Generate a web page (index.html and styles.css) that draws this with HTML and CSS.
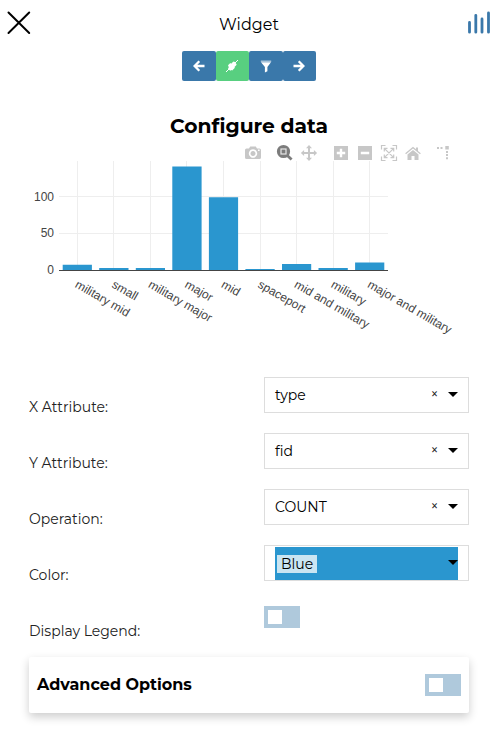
FILE: index.html
```html
<!DOCTYPE html>
<html lang="en">
<head>
<meta charset="utf-8">
<title>Widget</title>
<link rel="stylesheet" href="styles.css">
</head>
<body>
<header class="header">
  <svg class="close" width="24" height="24" viewBox="0 0 24 24"><path d="M1.5 1.500 22.200 22M22.200 1.500 1.500 22"/></svg>
  <span class="heading">Widget</span>
  <svg class="logo" width="24" height="24" viewBox="0 0 24 24"><path d="M2.500 12.500V22.200M8.800 5.300V22.200M15 9V22.200M21.500 3V22.200"/></svg>
</header>
<nav class="toolbar">
  <button class="tool"><svg width="12" height="12" viewBox="0 0 12 12"><path class="line" d="M11.500 6H2M6.300 1.300 1.600 6l4.700 4.700"/></svg></button>
  <button class="tool active"><svg width="14" height="14" viewBox="0 0 14 14"><path class="thin" d="M1 13 13 1"/><path d="M3 6.200 5.300 4l.8.8L8.500 2.400 10 3.100l1 1.400.7 1.300-2.200 2.100.4.9-2.700 2.600-1-.5-.9.9L3 9.800l.8-1.500z"/></svg></button>
  <button class="tool"><svg width="12" height="14" viewBox="0 0 12 14"><path d="M1 3.200h10L7.400 8v4.200L4.900 13.500V8z"/><path class="lid" d="M.8 1.500h10.400v1.600H.8z"/></svg></button>
  <button class="tool"><svg width="12" height="12" viewBox="0 0 12 12"><path class="line" d="M.5 6H10M5.700 1.300 10.400 6l-4.700 4.700"/></svg></button>
</nav>
<main class="content">
  <h1 class="title">Configure data</h1>
  <section class="chart">
    <svg width="440" height="216" viewBox="29 141 440 216">
      <path class="grid" d="M77.5 161V270M113.5 161V270M150.5 161V270M186.5 161V270M223.5 161V270M260.5 161V270M296.5 161V270M333.5 161V270M369.5 161V270M59 196.5H388M59 233.5H388"/>
      <g class="bars">
        <path d="M62.700 264.800H91.900V270H62.700zM99.200 268H128.500V270H99.200zM135.800 268H165V270H135.800zM172.300 166.400H201.600V270H172.300zM208.900 197.200H238.100V270H208.900zM245.400 269H274.700V270H245.400zM282 264.100H311.200V270H282zM318.500 268H347.800V270H318.500zM355.100 262.600H384.300V270H355.100z"/>
      </g>
      <path class="axis" d="M59 270.500H388"/>
      <g class="ticks" text-anchor="end"><text x="54" y="201">100</text><text x="54" y="237.300">50</text><text x="54" y="274.200">0</text></g>
      <g class="ticks">
        <text transform="translate(74.300 286.700) rotate(30)">military mid</text>
        <text transform="translate(110.900 286.700) rotate(30)">small</text>
        <text transform="translate(147.400 286.700) rotate(30)">military major</text>
        <text transform="translate(184 286.700) rotate(30)">major</text>
        <text transform="translate(220.500 286.700) rotate(30)">mid</text>
        <text transform="translate(257.100 286.700) rotate(30)">spaceport</text>
        <text transform="translate(293.600 286.700) rotate(30)">mid and military</text>
        <text transform="translate(330.200 286.700) rotate(30)">military</text>
        <text transform="translate(366.700 286.700) rotate(30)">major and military</text>
      </g>
      <g class="modebar">
        <path fill-rule="evenodd" d="M246.500 148.500H249l1.200-2h5.600l1.200 2h2.500q1.500 0 1.500 1.500v7.500q0 1.500-1.500 1.500h-13q-1.500 0-1.500-1.500V150q0-1.500 1.500-1.500zM253 149.300a4.200 4.200 0 1 0 .01 0zM253 151a2.500 2.500 0 1 0 .01 0zM258 149.600v1.500h1.600v-1.500z"/>
        <g class="selected"><circle cx="283.500" cy="151.500" r="5.400"/><path d="M287.300 155.500 291.600 159.600"/><rect x="281" y="149" width="5" height="5"/></g>
        <path d="M309 145l3 3.300h-2v3.700h3.900v-2l3.200 3-3.200 3v-2H310v3.700h2l-3 3.300-3-3.300h2V154h-3.900v2l-3.200-3 3.200-3v2h3.900v-3.700h-2z"/>
        <path fill-rule="evenodd" d="M334 146h14v14h-14zM339.800 148.800v3h-3v2.400h3v3h2.400v-3h3v-2.400h-3v-3z"/>
        <path fill-rule="evenodd" d="M358 146h14v14h-14zM360.800 151.800v2.400h8.400v-2.400z"/>
        <path class="outline" d="M381.500 149.500v-4h4M392.500 145.500h4v4M396.500 156.500v4h-4M385.500 160.500h-4v-4M384.800 148.800l8.400 8.400M393.200 148.800l-8.400 8.400M384.300 151.500v-3.200h3.200M390.500 148.300h3.200v3.200M393.700 154.500v3.200h-3.200M387.500 157.700h-3.200v-3.200"/>
        <path d="M405.200 153.300 413 146.800l3 2.500v-1.800h2v3.500l2.800 2.300-.8 1-7-5.700-7 5.700zM407.500 154.500l5.500-4.500 5.500 4.500V160h-4v-4h-3v4h-4z"/>
        <path d="M437 147h2v2H437zM440.500 147h2v2h-2zM445.300 145.900h3.500v3.500h-3.500zM446 151h2v2h-2zM446 154h2v2h-2zM446 157.200h2v2h-2z"/>
      </g>
    </svg>
  </section>
  <section class="form">
    <div class="row"><label class="label">X Attribute:</label><div class="select"><span class="value">type</span><span class="clear">×</span><i class="caret"></i></div></div>
    <div class="row"><label class="label">Y Attribute:</label><div class="select"><span class="value">fid</span><span class="clear">×</span><i class="caret"></i></div></div>
    <div class="row"><label class="label">Operation:</label><div class="select"><span class="value">COUNT</span><span class="clear">×</span><i class="caret"></i></div></div>
    <div class="row"><label class="label">Color:</label><div class="select"><div class="swatch"><span class="chip">Blue</span><i class="caret"></i></div></div></div>
    <div class="row"><label class="label">Display Legend:</label><div class="switch"><i class="knob"></i></div></div>
  </section>
  <section class="panel"><h2 class="panel-title">Advanced Options</h2><div class="switch"><i class="knob"></i></div></section>
</main>
</body>
</html>
```
FILE: styles.css
```css
* { box-sizing: border-box; }
body { margin: 0; background: #fff; color: #000; font-family: Montserrat, Inter, sans-serif; font-size: 14px; }
svg { display: block; }
.header { height: 51px; padding: 11px 6px 0 7px; display: flex; justify-content: space-between; align-items: flex-start; }
.close path { fill: none; stroke: #000; stroke-width: 2; stroke-linecap: round; }
.logo path { fill: none; stroke: #3a78aa; stroke-width: 2.8; stroke-linecap: round; }
.logo { margin-top: -1px; }
.heading { font-size: 16px; line-height: 28px; font-weight: 400; }
.toolbar { display: flex; justify-content: center; height: 30px; padding-left: 1px; }
.tool { width: 33.5px; height: 30px; padding: 0; border: 0; border-radius: 2px; background: #3a78aa; display: flex; align-items: center; justify-content: center; }
.tool.active { background: #58cf80; }
.tool path { fill: #fff; }
.tool .line { fill: none; stroke: #fff; stroke-width: 2.3; }
.tool .thin { stroke: #fff; stroke-width: 1; }
.tool .lid { fill: #a9c4da; }
.content { padding: 0 28px 42px 29px; }
.title { margin: 32px 0 0; height: 28px; line-height: 26px; text-align: center; font-size: 20.25px; font-weight: 700; }
.chart { height: 236px; }
.grid { fill: none; stroke: #eee; stroke-width: 1; }
.bars { fill: #2a96cf; }
.axis { stroke: #444; stroke-width: 1; }
.ticks { font: 12px "Liberation Sans", sans-serif; fill: #444; }
.modebar { fill: #c7c7c7; }
.modebar .outline { fill: none; stroke: #c7c7c7; stroke-width: 1.2; }
.selected { fill: none; stroke: #7c7c7c; stroke-width: 2.8; }
.selected circle { fill: #7c7c7c; stroke-width: 2.4; }
.selected rect { fill: none; stroke: #e8e8e8; stroke-width: 1.2; }
.row { display: flex; height: 56px; align-items: flex-start; }
.label { width: 235px; padding-top: 20px; line-height: 20px; font-weight: 400; color: #222; }
.select { width: 205px; height: 36px; border: 1px solid #ddd; padding: 0 10px; display: flex; align-items: center; }
.value { flex: 1; font-weight: 400; }
.clear { font-size: 14px; margin: -2px 9.5px 0 0; color: #222; }
.caret { border: 5px solid transparent; border-top-color: #000; border-bottom: 0; margin-bottom: 2px; }
.swatch { flex: 1; height: 33px; margin-top: 1px; background: #2a96cf; display: flex; align-items: center; justify-content: space-between; padding-left: 2px; }
.chip { height: 18px; width: 40px; line-height: 18px; padding-left: 4px; background: #cae5f2; font-weight: 400; margin-top: 1px; }
.switch { width: 36px; height: 22px; padding: 4px; background: #afc9dc; }
.row .switch { margin-top: 5px; }
.knob { display: block; width: 14px; height: 14px; background: #fff; }
.panel { height: 56px; padding: 0 8px; display: flex; justify-content: space-between; align-items: center; border-radius: 2px; box-shadow: 0 4px 10px rgba(0,0,0,.2); }
.panel-title { margin: 0; font-size: 16px; line-height: 20px; font-weight: 700; }
```
